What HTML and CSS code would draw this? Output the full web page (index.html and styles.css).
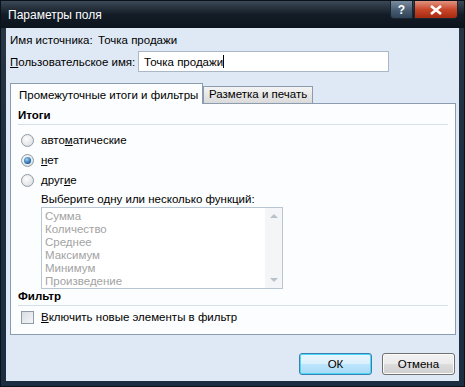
FILE: index.html
```html
<!DOCTYPE html>
<html>
<head>
  <meta charset="UTF-8">
  <title>Параметры поля</title>
  <link rel="stylesheet" href="styles.css">
</head>
<body>
  <div class="window">
    <div class="titlebar">
      <span class="title">Параметры поля</span>
      <div class="caption-buttons">
        <span class="cap-btn help">?</span>
        <span class="cap-btn close">
          <svg width="14" height="10" viewBox="0 0 14 10"><path d="M2 1 L12 9 M12 1 L2 9" stroke="#fff" stroke-width="2.6"/></svg>
        </span>
      </div>
    </div>
    <div class="client">
      <div class="row source">
        <span class="label">Имя источника:</span>
        <span>Точка продажи</span>
      </div>
      <div class="row custom">
        <span class="label"><u>П</u>ользовательское имя:</span>
        <div class="textbox">Точка продажи<span class="caret"></span></div>
      </div>
      <div class="tabs">
        <div class="tab active">Промежуточные итоги и фильтры</div>
        <div class="tab second">Разметка и печать</div>
      </div>
      <div class="panel">
        <div class="group-title">Итоги</div>
        <div class="option"><span class="radio"></span>авто<u>м</u>атические</div>
        <div class="option"><span class="radio checked"></span><u>н</u>ет</div>
        <div class="option"><span class="radio"></span>друг<u>и</u>е</div>
        <div class="functions">
          <div class="hint">Выберите одну или несколько функций:</div>
          <div class="listbox">
            <div class="items">
              <div>Сумма</div>
              <div>Количество</div>
              <div>Среднее</div>
              <div>Максимум</div>
              <div>Минимум</div>
              <div>Произведение</div>
            </div>
            <div class="scrollbar">
              <span class="arrow up"></span>
              <span class="arrow down"></span>
            </div>
          </div>
        </div>
        <div class="group-title filter">Фильтр</div>
        <div class="option"><span class="checkbox"></span><u>В</u>ключить новые элементы в фильтр</div>
      </div>
      <div class="buttons">
        <button class="btn default">ОК</button>
        <button class="btn">Отмена</button>
      </div>
    </div>
  </div>
</body>
</html>
```

FILE: styles.css
```css
* {
  box-sizing: border-box;
}
body {
  margin: 0;
  font-family: 'Liberation Sans', Arial, sans-serif;
  font-size: 11.5px;
  color: #000;
  white-space: nowrap;
}
.window {
  width: 465px;
  height: 387px;
  display: flex;
  flex-direction: column;
  background: linear-gradient(#2a3744, #1d2f42 40%, #1b2d40);
  border: 1px solid #0a121b;
}
.titlebar {
  height: 27px;
  display: flex;
  align-items: flex-start;
  padding-left: 7px;
  background: linear-gradient(#3b4856, #141d27 50%, #0b131c);
}
.title {
  color: #fff;
  margin-top: 7px;
  font-size: 12px;
}
.caption-buttons {
  margin-left: auto;
  margin-right: 6px;
  display: flex;
  gap: 1px;
}
.cap-btn {
  height: 18px;
  display: flex;
  align-items: center;
  justify-content: center;
  border: 1px solid #1b2530;
  border-top: none;
  color: #fff;
  font-weight: bold;
  font-size: 12px;
}
.help {
  width: 23px;
  background: linear-gradient(#7b8d9f, #4c6075 50%, #2f4257);
  border-radius: 0 0 0 4px;
}
.close {
  width: 44px;
  background: linear-gradient(#e2937f, #c8472a 50%, #a52a10);
  border-radius: 0 0 4px 0;
}
.client {
  flex: 1;
  margin: 0 5px 5px;
  background: #dfe9f5;
  padding: 4px 3px 0 4px;
  display: flex;
  flex-direction: column;
}
.row {
  display: flex;
  align-items: center;
}
.source {
  height: 16px;
}
.source .label {
  width: 88px;
}
.custom {
  margin-top: 3px;
  height: 21px;
}
.custom .label {
  width: 128px;
}
.textbox {
  width: 251px;
  height: 21px;
  border: 1px solid #a9b7c6;
  background: #fff;
  padding: 3px 5px;
  display: flex;
  align-items: center;
}
.caret {
  width: 1px;
  height: 13px;
  background: #000;
}
.tabs {
  margin-top: 10px;
  display: flex;
  align-items: flex-end;
  height: 21px;
}
.tab {
  height: 17px;
  padding: 1px 5px 0;
  border: 1px solid #8b9cae;
  border-bottom: none;
  background: linear-gradient(#f4f4f4, #dadada);
}
.tab.active {
  height: 21px;
  width: 193px;
  padding: 5px 8px 0;
  background: #fcfdfe;
  position: relative;
  top: 1px;
}
.panel {
  width: 446px;
  height: 232px;
  border: 1px solid #8b9cae;
  background: #fcfdfe;
  padding: 5px 7px 0;
}
.group-title {
  font-weight: bold;
  padding-bottom: 3px;
  border-bottom: 1px solid #d5dfe9;
  margin-bottom: 5px;
}
.group-title.filter {
  margin-top: 1px;
  margin-bottom: 1px;
}
.option {
  display: flex;
  align-items: center;
  height: 20px;
}
.option u,
.label u {
  text-decoration-thickness: 1px;
}
.radio {
  width: 13px;
  height: 13px;
  border-radius: 50%;
  border: 1px solid #8f9ba6;
  background: radial-gradient(circle at 40% 35%, #fdfdfd, #d5d8dc);
  margin: 0 7px 0 3px;
  position: relative;
}
.radio.checked::after {
  content: "";
  position: absolute;
  left: 2px;
  top: 2px;
  width: 7px;
  height: 7px;
  border-radius: 50%;
  background: radial-gradient(circle at 40% 35%, #9ed0f4, #1b5fa3 70%);
}
.checkbox {
  width: 13px;
  height: 13px;
  border: 1px solid #8f9ba6;
  background: linear-gradient(135deg, #d8dde3, #f4f6f8);
  margin: 0 7px 0 3px;
}
.functions {
  padding-left: 23px;
}
.hint {
  margin-top: 3px;
}
.listbox {
  margin-top: 2px;
  width: 242px;
  height: 82px;
  border: 1px solid #b8c5d2;
  background: #fff;
  display: flex;
}
.items {
  flex: 1;
  color: #a3a3a3;
  padding: 2px 3px;
  line-height: 13px;
}
.scrollbar {
  width: 17px;
  background: #f3f5f7;
  display: flex;
  flex-direction: column;
  justify-content: space-between;
  align-items: center;
  padding: 6px 0;
}
.arrow {
  width: 0;
  height: 0;
  border-left: 4px solid transparent;
  border-right: 4px solid transparent;
}
.arrow.up {
  border-bottom: 4px solid #b9c2cc;
}
.arrow.down {
  border-top: 4px solid #b9c2cc;
}
.buttons {
  margin-top: auto;
  margin-bottom: 6px;
  display: flex;
  justify-content: flex-end;
  gap: 10px;
  padding-right: 1px;
}
.btn {
  width: 73px;
  height: 22px;
  font-family: inherit;
  font-size: 11.5px;
  border: 1px solid #707070;
  border-radius: 3px;
  background: linear-gradient(#f2f2f2, #ebebeb 50%, #dddddd 50%, #cfcfcf);
  box-shadow: inset 0 0 0 1px #fbfbfb;
}
.btn.default {
  border-color: #3c7fb1;
  background: linear-gradient(#eaf6fd, #d9f0fc 50%, #bee6fd 50%, #a7d9f5);
  box-shadow: inset 0 0 0 1px #48d8f8;
}
```
